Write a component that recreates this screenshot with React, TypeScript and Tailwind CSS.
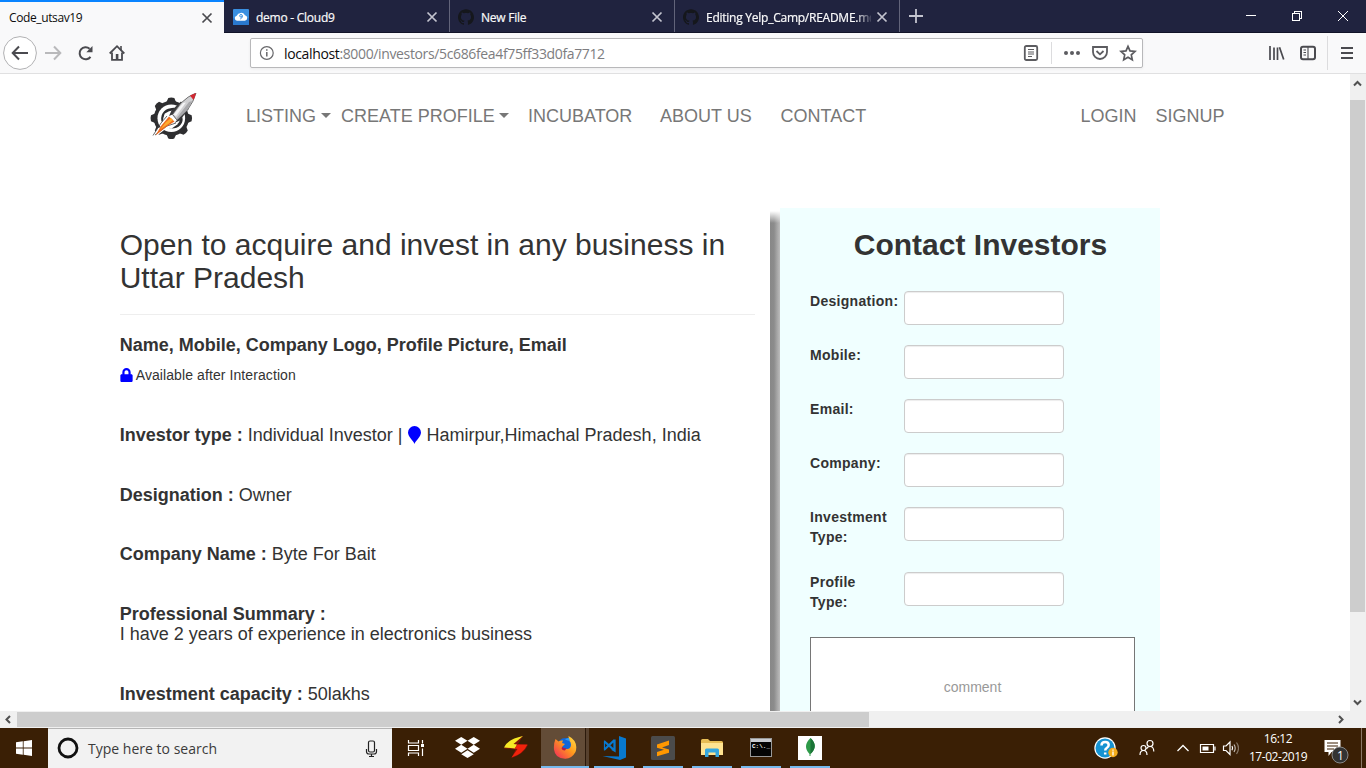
import React from 'react';
import { SiDropbox, SiGithub } from 'react-icons/si';
import { FaLock } from 'react-icons/fa';

const ui = "font-['Open_Sans','Noto_Sans',sans-serif]";

function CloseX({ color }: { color: string }) {
  return (
    <svg width="12" height="12" viewBox="0 0 12 12" fill="none" stroke={color} strokeWidth="1.7">
      <path d="M1.5 1.5 10.5 10.5M10.5 1.5 1.5 10.5" />
    </svg>
  );
}

function CloudIcon() {
  return (
    <svg width="16" height="16" viewBox="0 0 16 16">
      <rect width="16" height="16" rx="1" fill="#3a8fe0" />
      <rect y="9" width="16" height="7" rx="1" fill="#2a79cf" />
      <path d="M4 11.8a2.6 2.6 0 0 1-.3-5.1A4.6 4.6 0 0 1 12 6.300a2.8 2.8 0 0 1 0 5.5z" fill="#fff" />
      <circle cx="8" cy="6.8" r="1.3" fill="none" stroke="#3a8fe0" />
      <path d="M9.3 6.7C9.300 8.500 8.700 9.500 7.300 10" fill="none" stroke="#3a8fe0" />
    </svg>
  );
}

function Tab({ title, icon, fade }: { title: string; icon: React.ReactNode; fade?: boolean }) {
  return (
    <div className="flex h-full w-[225px] shrink-0 items-center border-r border-[#62647a] pr-[12px] pl-[8px]">
      <div className="mt-[2px] w-4 shrink-0">{icon}</div>
      <div className={fade ? 'ml-[7px] w-[165px] shrink-0 overflow-hidden [mask-image:linear-gradient(to_right,#000_91%,rgba(0,0,0,0.15)_100%)]' : 'ml-[7px] w-[165px] shrink-0'}>
        <span className="block pt-[3px] text-[12px] leading-5 tracking-[-0.25px] whitespace-nowrap text-[#f9f9fa] [-webkit-text-stroke:0.2px]">{title}</span>
      </div>
      <div className="mt-[2px] ml-[5px] w-3 shrink-0">
        <CloseX color="#c3c4cf" />
      </div>
    </div>
  );
}

function TabBar() {
  return (
    <div className={`flex h-[33px] border-b border-[#111328] bg-[#20233f] ${ui}`}>
      <div className="flex h-[33px] w-[224px] shrink-0 items-center border-t-2 border-t-[#0a84ff] bg-[#f9f9fa] pr-[11px] pl-[9px]">
        <span className="flex-1 text-[12px] tracking-[-0.38px] text-[#0c0c0d]">Code_utsav19</span>
        <CloseX color="#4a4a4f" />
      </div>
      <div className="ml-[1px] flex h-[32px] w-[675px] shrink-0">
        <Tab title="demo - Cloud9" icon={<CloudIcon />} />
        <Tab title="New File" icon={<SiGithub size={16} color="#15171c" />} />
        <Tab title="Editing Yelp_Camp/README.md" icon={<SiGithub size={16} color="#15171c" />} fade />
      </div>
      <svg className="mt-[9px] ml-[9px]" width="14" height="14" stroke="#c3c4cf" strokeWidth="1.8">
        <path d="M7 0v14M0 7h14" />
      </svg>
      <div className="ml-auto flex items-start pt-[10px]">
        <svg width="12" height="12" className="mr-[34px]" shapeRendering="crispEdges"><path d="M1 5.5h10" stroke="#fff" /></svg>
        <svg width="12" height="12" className="mr-[34px]" fill="none" stroke="#fff" shapeRendering="crispEdges">
          <path d="M1.5 3.5h7v7h-7zM3.5 3V1.5h7v7H9" />
        </svg>
        <svg width="12" height="12" className="mr-[17px]" fill="none" stroke="#fff"><path d="m1 1 10 10M11 1 1 11" /></svg>
      </div>
    </div>
  );
}

function Toolbar() {
  return (
    <div className={`flex h-[41px] items-start border-b border-[#e0e0e1] bg-[#f9f9fa] ${ui}`}>
      <svg width="130" height="40" className="shrink-0" fill="none" stroke="#4a4a4f" strokeWidth="2">
        <circle cx="20" cy="20" r="16.4" fill="#fff" stroke="#b1b1b3" strokeWidth="1" />
        <path d="M28 20H13M19 13.5 12.7 20l6.3 6.5" />
        <g stroke="#b9b9bb"><path d="M45 20h15M54 13.5l6.3 6.5-6.3 6.5" /></g>
        <path d="M90.5 23.8A6 6 0 1 1 89.6 15.8" />
        <path d="M92.5 13v6.2h-6.2z" fill="#4a4a4f" stroke="none" />
        <path d="M109.7 20.5 117 13.2l7.3 7.3" strokeWidth="1.8" />
        <path d="M112 19.5v7.3h10v-7.3" strokeWidth="1.8" />
        <path d="M121 13v4" strokeWidth="1.6" />
        <path d="M115.8 27v-6h2.6v6z" fill="#4a4a4f" stroke="none" />
      </svg>
      <div className="mt-[5px] ml-[120px] flex h-[30px] w-[893px] shrink-0 items-center rounded-[2px] border border-[#b8b8ba] bg-white shadow-[0_1px_3px_rgba(0,0,0,0.06)]">
        <svg width="32" height="28" fill="none" stroke="#68686b" className="shrink-0">
          <circle cx="15.8" cy="14" r="6.4" strokeWidth="1.2" />
          <path d="M15.8 13v4.5M15.8 10.2v1.6" strokeWidth="1.5" />
        </svg>
        <span className="mt-[1px] ml-[1px] flex-1 text-[14px] tracking-[-0.36px] text-[#7d7d80]"><span className="text-[#0c0c0d]">localhost</span>:8000/investors/5c686fea4f75ff33d0fa7712</span>
        <svg width="123" height="28" fill="none" stroke="#5c5c60" strokeWidth="1.8" className="shrink-0">
          <rect x="5.8" y="7" width="12.4" height="14" rx="1.5" />
          <path d="M9 10.5h6M9 13h6M9 15h6M9 17.5h4" strokeWidth="1" />
          <path d="M32.5 3v22" stroke="#dcdcde" strokeWidth="1" />
          <g fill="#5c5c60" stroke="none"><circle cx="47" cy="14" r="2" /><circle cx="53" cy="14" r="2" /><circle cx="59" cy="14" r="2" /></g>
          <path d="M74 8h14v5a7 7 0 0 1-14 0zM77.5 12l3.5 3.3 3.5-3.3" />
          <path d="m109 7.3 2 4.6 5 .5-3.7 3.4 1 4.9-4.3-2.5-4.3 2.5 1-4.9-3.7-3.4 5-.5z" strokeWidth="1.7" />
        </svg>
      </div>
      <svg width="106" height="40" className="ml-auto shrink-0" fill="none" stroke="#4a4a4f" strokeWidth="2">
        <path d="M10 13v14M14 14.5V27M17.5 14.5V27M19.5 14.3l4.2 12.3" strokeWidth="1.7" />
        <rect x="41" y="13.8" width="14" height="12.4" rx="2" />
        <path d="M48 14v12M43.5 17h2.5M43.5 19.5h2.5M43.5 22h2.5" strokeWidth="1.1" />
        <path d="M67.5 3v34" stroke="#dcdcde" strokeWidth="1" />
        <path d="M81 15h12M81 20h12M81 25h12" />
      </svg>
    </div>
  );
}

function RocketLogo() {
  const teeth = [0, 45, 90, 135, 180, 225, 270, 315];
  return (
    <svg width="48" height="48" viewBox="0 0 48 48">
      <g fill="#2e2e30">
        {teeth.map((a) => (
          <path key={a} d="M17.500 9 19.300 5Q22.300 4 25.300 5L27 9z" transform={`rotate(${a} 22.3 25.3)`} />
        ))}
        <circle cx="22.3" cy="25.3" r="17.500" />
      </g>
      <circle cx="22.3" cy="25.3" r="13.800" fill="#fff" />
      <g fill="none" stroke="#2e2e30" strokeLinecap="round">
        <path d="M13.500 27.500C12.500 20 17.500 16.500 24.500 16" strokeWidth="2.400" />
        <path d="M31.500 23.500C34 29.500 29 34.500 21.500 34" strokeWidth="2.800" />
      </g>
      <path d="M16 20 29 31 22 36 19 34 5 45 2.500 44 9 35 12 34z" fill="#fff" />
      <path d="M18 23 12 30 4 42.500M27 30 18 33 6 42" fill="none" stroke="#444" strokeWidth=".8" />
      <path d="M20 23.500 25.500 28.500 17 34 6.500 42.500 12 33z" fill="#ee6a1f" />
      <path d="M22 25 17 29 11 36.500 20 30.500 24 27z" fill="#ffab2e" />
      <path d="M32 8.500 22.500 17.500 20 23 23.500 21.500 28 27 25.500 30 31 27.500 39.500 16z" fill="#3a3a3c" />
      <path d="M23.500 21.500 32 10Q39 3 47 0 45 8 38.500 17L28 27z" fill="#cfcfd1" stroke="#555" strokeWidth=".8" />
      <path d="M27 26 40 9 43 8Q41 13 38 17L28.500 26.500z" fill="#a8a8ab" />
      <path d="M24.500 21.500 34 10 37 9.500 27 23z" fill="#f4f4f5" />
      <path d="M41 2.500Q44 1 47 0 46 4 44.500 7z" fill="#d32630" />
    </svg>
  );
}

function Caret() {
  return <span className="mt-[-2px] ml-[4.500px] inline-block border-x-[5px] border-t-[5px] border-x-transparent border-t-[#777]" />;
}

function Nav() {
  return (
    <nav className="flex h-[84px] items-center pl-[149px] text-[18px] leading-[20px] text-[#777]">
      <div className="mt-[1px] w-[97px]"><RocketLogo /></div>
      <a className="flex w-[95px] items-center">LISTING<Caret /></a>
      <a className="flex w-[187px] items-center whitespace-nowrap">CREATE PROFILE<Caret /></a>
      <a className="w-[132px]">INCUBATOR</a>
      <a className="w-[120.500px]">ABOUT US</a>
      <a className="w-[300px]">CONTACT</a>
      <a className="w-[75px]">LOGIN</a>
      <a>SIGNUP</a>
    </nav>
  );
}

const fields = ['Designation:', 'Mobile:', 'Email:', 'Company:', 'Investment Type:', 'Profile Type:'];

function ContactForm() {
  return (
    <aside className="flex h-[503px] w-[390px] shrink-0">
      <div className="h-full w-[10px] bg-[linear-gradient(to_right,#888_0%,#8c8c8c_40%,#bdbdbd_100%)] [mask-image:linear-gradient(to_bottom,transparent_3px,#000_15px)]" />
      <div className="w-[380px] bg-[#f0ffff] pt-[20px] pr-[10px] pl-[30px]">
        <h2 className="mb-[30px] pl-[1px] text-center text-[30px] leading-[33px] font-bold">Contact Investors</h2>
        {fields.map((f) => (
          <div key={f} className="mb-[20px] flex items-start text-[14px] leading-[20px] font-bold">
            <label className="mb-[5px] w-[94px] shrink-0 pr-[12px] tracking-[0.3px]">{f}</label>
            <input className="h-[34px] w-[160px] rounded-[4px] border border-[#ccc] bg-white shadow-[inset_0_1px_1px_rgba(0,0,0,0.075)]" />
          </div>
        ))}
        <div className="h-[74px] w-[325px] border border-b-0 border-[#767676] bg-white pt-[39px] text-center text-[14px] leading-[20px] text-[#999]">comment</div>
      </div>
    </aside>
  );
}

function Detail({ label, children }: { label: string; children: React.ReactNode }) {
  return (
    <h4 className="mb-[40px] text-[18px] leading-[19.8px]">
      <b>{label}</b> {children}
    </h4>
  );
}

function Investor() {
  return (
    <section className="ml-[-0.300px] w-[650.300px] shrink-0 pt-[20px] pr-[15px]">
      <h2 className="text-[30px] leading-[33px]">Open to acquire and invest in any business in Uttar Pradesh</h2>
      <hr className="mt-[20px] mb-[20px] border-t border-[#eee]" />
      <h4 className="text-[18px] leading-[20px] font-bold">Name, Mobile, Company Logo, Profile Picture, Email</h4>
      <p className="mt-[10px] mb-[40.800px] flex items-center text-[14px] leading-[20px] tracking-[0.090px]">
        <FaLock className="mr-[3px] h-[14px] w-[13px]" color="#00f" />Available after Interaction
      </p>
      <Detail label="Investor type :">
        Individual Investor |{' '}
        <svg className="mr-[1px] inline-block align-[-3px]" width="13" height="18" viewBox="0 0 13 18">
          <path d="M6.500 18C5.700 15 0 10.800 0 6.500a6.500 6.500 0 0 1 13 0C13 10.800 7.300 15 6.500 18z" fill="#00f" />
        </svg>{' '}
        Hamirpur,Himachal Pradesh, India
      </Detail>
      <Detail label="Designation :">Owner</Detail>
      <Detail label="Company Name :">Byte For Bait</Detail>
      <Detail label="Professional Summary :"><br />I have 2 years of experience in electronics business</Detail>
      <Detail label="Investment capacity :">50lakhs</Detail>
    </section>
  );
}

function Page() {
  return (
    <div className="flex h-[637px]">
      <main className="h-[637px] w-[1350px] overflow-hidden bg-white font-['Liberation_Sans',Arial,sans-serif] text-[#333]">
        <Nav />
        <div className="mt-[50px] flex pl-[120px]">
          <Investor />
          <ContactForm />
        </div>
      </main>
      <div className="flex w-[16px] flex-col bg-[#f0f0f0]">
        <svg width="16" height="26" fill="none" stroke="#505050" strokeWidth="2"><path d="m4 11.500 3.500-3.500 3.500 3.500" /></svg>
        <div className="h-[512px] w-[15px] bg-[#cdcdcd]" />
        <svg className="mt-auto" width="16" height="17" fill="none" stroke="#505050" strokeWidth="2"><path d="m4 6.500 3.500 3.500 3.500-3.500" /></svg>
      </div>
    </div>
  );
}

function HScroll() {
  return (
    <div className="flex h-[17px] items-center bg-[#f0f0f0]">
      <svg width="17" height="17" fill="none" stroke="#505050" strokeWidth="2"><path d="M10 5 6.500 8.500 10 12" /></svg>
      <div className="h-[15px] w-[852px] bg-[#cdcdcd]" />
      <svg className="mr-[16px] ml-auto" width="17" height="17" fill="none" stroke="#505050" strokeWidth="2"><path d="m6 5 3.500 3.500L6 12" /></svg>
    </div>
  );
}

function TaskApp({ children, open }: { children: React.ReactNode; open?: boolean }) {
  return (
    <div className="flex h-full w-[49px] shrink-0 flex-col items-center">
      <div className="flex h-[38px] items-center justify-center pt-[1px]">{children}</div>
      {open && <div className="h-[2px] w-[40px] bg-[#76b9ed]" />}
    </div>
  );
}

function Taskbar() {
  return (
    <div className={`flex h-[40px] bg-[#3a1f05] ${ui}`}>
      <div className="flex w-[48px] shrink-0 items-center justify-center">
        <svg width="16" height="16" fill="#fff"><path d="M0 2.300 6.800 1.300V7.400H0zM7.600 1.200 16 0v7.400H7.600zM0 8.400h6.800v6.300L0 13.700zM7.600 8.400H16V16L7.600 14.800z" /></svg>
      </div>
      <div className="flex w-[344px] shrink-0 items-center border-t border-[#b5b5b5] bg-[#f2f2f2]">
        <svg width="40" height="39" fill="none"><circle cx="20" cy="19" r="9" stroke="#111" strokeWidth="2.800" /></svg>
        <span className="flex-1 text-[14px] tracking-[0.010px] text-[#3b3b3b]">Type here to search</span>
        <svg width="13" height="18" className="mr-[14px]" fill="none" stroke="#222" strokeWidth="1.200">
          <rect x="3.500" y="1" width="6" height="11" rx="1.500" /><path d="M1.500 9v2.500q0 2.500 2.500 2.500h5q2.500 0 2.500-2.500V9M6.500 14v2.500M4 16.500h5" />
        </svg>
      </div>
      <div className="flex w-[51px] shrink-0 items-center justify-center pr-[3px]">
        <svg width="18" height="16" fill="none" stroke="#fff" strokeWidth="1.200">
          <path d="M1.500 0v3h10V0M1.500 16v-3h10v3M1.500 5.500h10v5h-10zM15.500 0v3.500M15.500 8.500V16" /><path d="M14 4h3v3h-3z" fill="#fff" stroke="none" />
        </svg>
      </div>
      <TaskApp><SiDropbox size={25} color="#fff" /></TaskApp>
      <TaskApp>
        <svg width="24" height="24" viewBox="0 0 24 24" className="mt-[-2px] mr-[2px]">
          <path d="M19 1Q4 5 0 13.500L11.500 14.500 7.500 23Q20 19 24 10L14 9z" fill="#7c1608" />
          <path d="M19 1Q4 4 0 12.500L11 13.500 13 9.500 9.500 9z" fill="#f7e925" />
          <path d="M13.500 9.500 23.500 9.500Q19 19 7.500 22.500L13.500 14 10.500 13.500z" fill="#f0230c" />
        </svg>
      </TaskApp>
      <div className="flex h-full w-[48px] shrink-0 flex-col">
        <div className="flex h-[38px]">
          <div className="flex w-[44px] items-center justify-center bg-[#634c37] pt-[1px] pl-[4px]">
            <svg width="24" height="24" viewBox="0 0 24 24">
              <defs><linearGradient id="fx" x1="1" y1="0" x2="0" y2="1"><stop stopColor="#ffe34a" /><stop offset=".450" stopColor="#ff9a1d" /><stop offset="1" stopColor="#f0205f" /></linearGradient></defs>
              <circle cx="12.500" cy="10.500" r="8.500" fill="#1267d8" />
              <path d="M2.500 3 5.500 5.500q2-1.500 4.500-1L9 7l3 1-3 3q1 3 4.500 2 3 .500 4-2 1.500-4-1.500-6.500L15.500 0q4 2 6 5 3 5 1 11-4 7-10.500 6.700Q2 22.500 1 13.500q-.500-6 1.500-10.500z" fill="url(#fx)" />
              <path d="M9.500 11q2 2 4 1l-1.500 2.500q-3 0-3.500-2.500z" fill="#b5184a" />
              <path d="M12 3.500q2-2 4-1.500l1 3q-2-.500-5-1.500z" fill="#2b9bf4" />
            </svg>
          </div>
          <div className="w-[4px] border-l border-[#2c1a0b] bg-[#57412e]" />
        </div>
        <div className="h-[2px] bg-[#76b9ed]" />
      </div>
      <TaskApp open>
        <svg width="24" height="24" viewBox="0 0 24 24"><path d="M17 0 24 2.500v19L18 24 .500 20l16.500 .500z" fill="#0879cf" /><path d="M2.500 5.500 12.500 14.500M12.500 3.500v11L10 13M2.500 13.500 12.500 4" fill="none" stroke="#0879cf" strokeWidth="2.300" /><path d="M2.500 4.500v10" stroke="#0879cf" strokeWidth="1.200" /></svg>
      </TaskApp>
      <TaskApp open>
        <svg width="24" height="24" viewBox="0 0 24 24"><rect width="24" height="24" rx="1.500" fill="#4b4b4b" /><path d="M6 8.500 18 4.500V9L11 11.500l7 2v3.200L6 20.300V16l7-2.300-7-1.900z" fill="#ff9800" /></svg>
      </TaskApp>
      <TaskApp open>
        <svg width="22" height="20" viewBox="0 0 22 20"><path d="M0 2.500Q0 1 1.500 1H7l2 2h11.500Q22 3 22 4.500V17H0z" fill="#e8bd55" /><path d="M0 5h22v12H0z" fill="#ffe391" /><path d="M4 19v-7q0-1.500 1.500-1.500h11Q18 10.500 18 12v7h-3.500v-4.500h-7V19z" fill="#35a7e0" /></svg>
      </TaskApp>
      <TaskApp open>
        <svg width="22" height="20" viewBox="0 0 22 20"><rect x=".500" y=".500" width="21" height="18" fill="#050505" stroke="#999" /><path d="M1 1h20v3H1z" fill="#c9ccd1" /><text x="2" y="10" fontSize="6" fill="#fff" fontFamily="Liberation Mono" fontWeight="bold">C:\._</text></svg>
      </TaskApp>
      <TaskApp open>
        <svg width="24" height="24" viewBox="0 0 24 24"><path d="M0 0h24v24H0z" fill="#fff" /><path d="M12.500 2Q21 10 12.500 18v2h-1v-2Q4 10 12.500 2z" fill="#2e9a49" /><path d="M12.500 2Q21 10 12.500 18z" fill="#1b7437" /></svg>
      </TaskApp>
      <div className="ml-auto flex shrink-0 items-center">
        <svg width="149" height="40" fill="none" stroke="#fff" strokeWidth="1.200" className="shrink-0">
          <circle cx="15" cy="20" r="10.700" fill="#fff" stroke="none" />
          <circle cx="15" cy="20" r="9.500" fill="#1593d2" stroke="none" />
          <path d="M11.500 17.500q0-3.500 3.700-3.500 3.500 0 3.500 3 0 1.700-2 3-1.500 1-1.500 2.500M15.200 24.500v2" strokeWidth="2.500" />
          <circle cx="23" cy="24.500" r="4.700" fill="#f4ac1c" stroke="none" /><path d="M23 23.500v4M23 21.500v1.200" strokeWidth="1.300" />
          <circle cx="53.500" cy="20" r="2.500" /><circle cx="60" cy="15.500" r="3" /><path d="M50 27q0-4.500 3.500-4.500T57 27M56.500 21q1-2.500 3.500-2.500 3.800 0 3.800 5" />
          <path d="m87.500 23 5.500-5.500 5.500 5.500" strokeWidth="1.300" />
          <path d="M110.500 16.500h13v8h-13zM125 18.500v4" /><path d="M112.500 18.500h6v4h-6z" fill="#fff" stroke="none" />
          <path d="M133.500 18v4.500h2.500l4 4v-12.500l-4 4z" /><path d="M142 18q1.200 2 0 4.300" /><path d="M144 16.500q2.500 3.700 0 7.500" opacity=".7" /><path d="M146.500 14.500q4 5.500 0 11.500" opacity=".4" />
        </svg>
        <div className="w-[83px] pr-[5px] text-center text-[12px] leading-[18px] tracking-[-0.450px] text-white">16:12<br />17-02-2019</div>
        <svg width="44" height="40" className="shrink-0">
          <path d="M2.500 12h16v12h-9l-3 4v-4h-4z" fill="#fff" /><path d="M5 15h11M5 18h11M5 21h7" stroke="#3a1f05" />
          <circle cx="18" cy="27" r="8" fill="#333" stroke="#888" /><text x="15" y="31.500" fontSize="12" fill="#fff" fontFamily="Open Sans">1</text>
          <path d="M39.500 0v40" stroke="#8a7766" />
        </svg>
      </div>
    </div>
  );
}

export default function App() {
  return (
    <div className="h-[768px] w-[1366px] overflow-hidden bg-white">
      <TabBar />
      <Toolbar />
      <Page />
      <HScroll />
      <Taskbar />
    </div>
  );
}
